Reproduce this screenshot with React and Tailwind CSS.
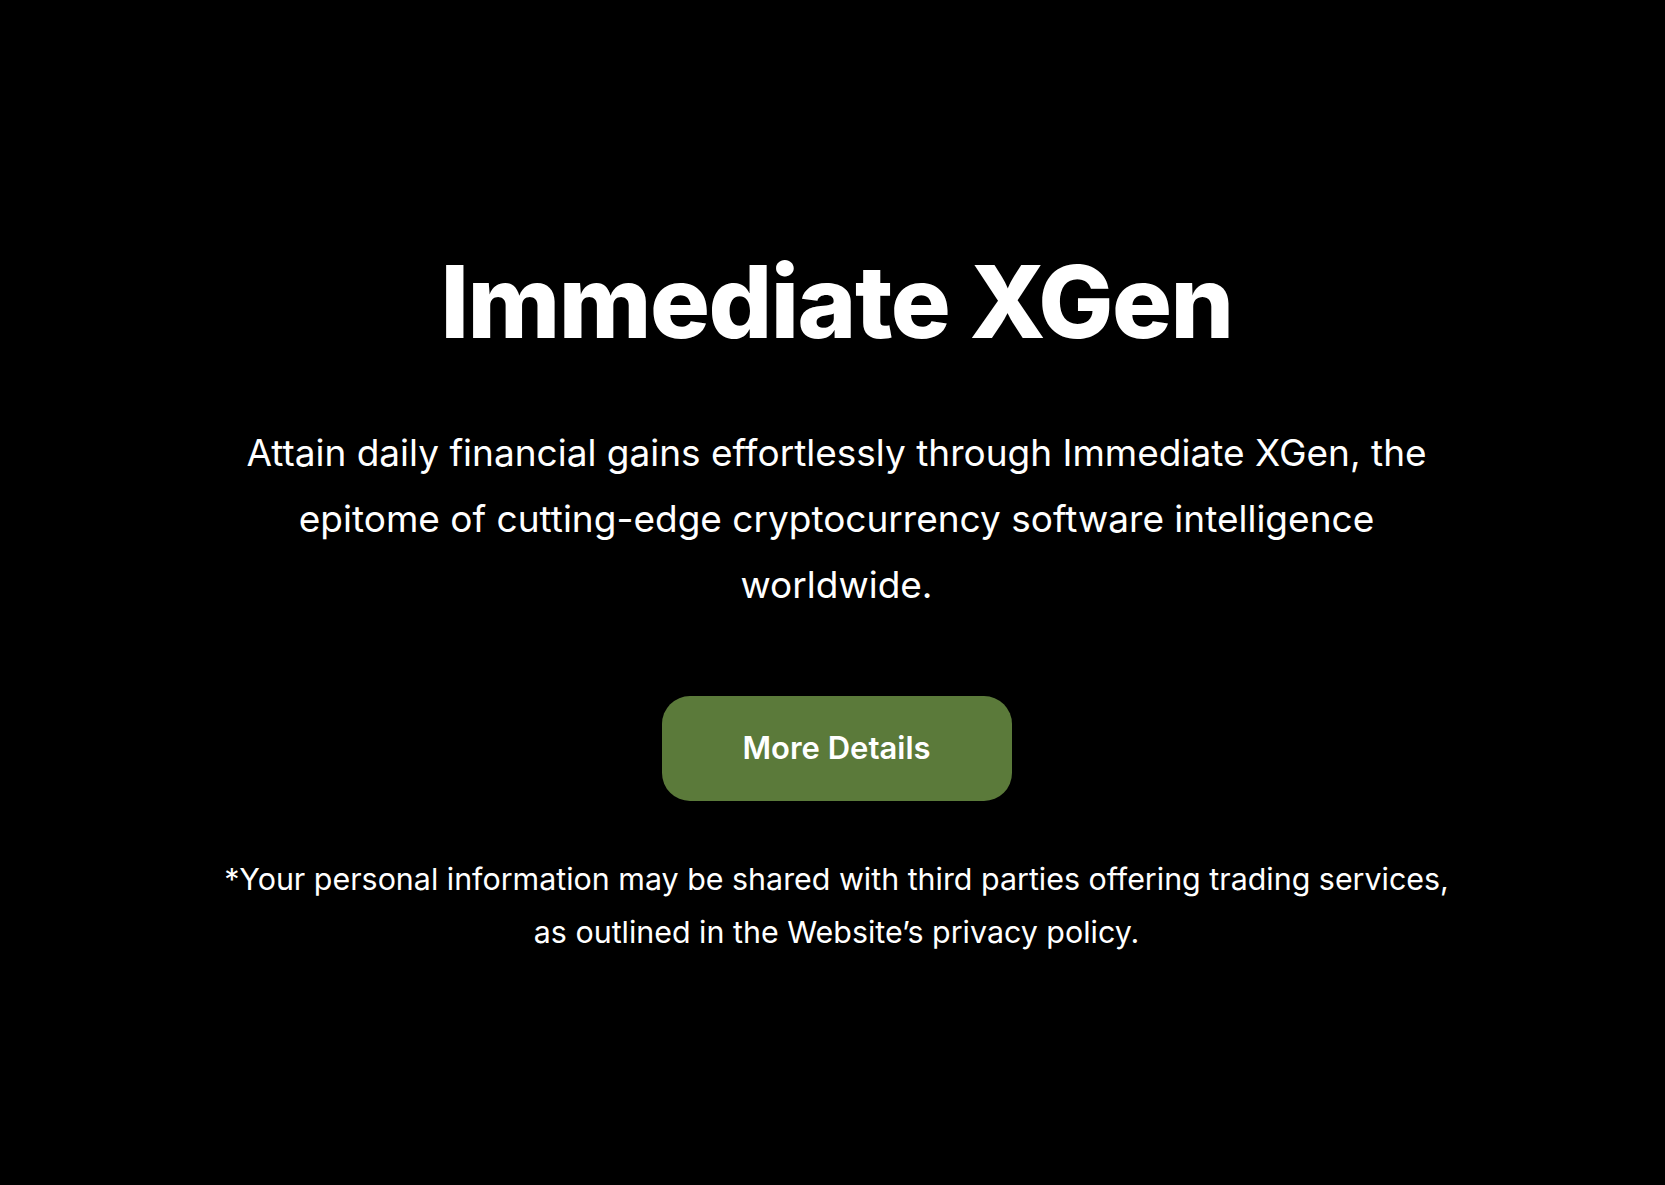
import React from 'react';

export default function App() {
  return (
    <div className="min-h-screen w-full bg-black text-white font-['Inter','Liberation_Sans',sans-serif]">
      <section className="flex flex-col items-center pl-[28px] pr-[20px] pt-[242px] text-center">
        <h1 className="text-[100px] leading-[1.2] font-extrabold tracking-[-0.015em]">Immediate XGen</h1>

        <p className="mt-[58px] max-w-[1200px] text-[37px] leading-[66px] font-normal">
          Attain daily financial gains effortlessly through Immediate XGen, the epitome of cutting-edge cryptocurrency software intelligence worldwide.
        </p>

        <button className="mt-[78px] h-[105px] w-[350px] rounded-[28px] bg-[#5b7a3a] text-[31px] font-semibold text-white">
          More Details
        </button>

        <p className="mt-[52px] max-w-[1240px] text-[30.4px] leading-[53px] font-normal">
          *Your personal information may be shared with third parties offering trading services, as outlined in the Website’s privacy policy.
        </p>
      </section>
    </div>
  );
}
